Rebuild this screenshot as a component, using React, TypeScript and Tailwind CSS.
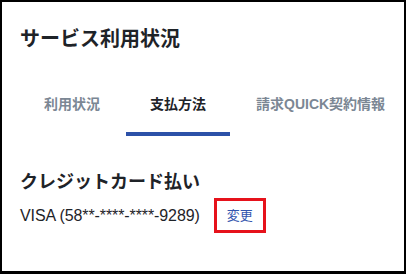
import React from "react";

const FONT = { fontFamily: '"Liberation Sans", "Noto Sans CJK JP", sans-serif' };

export default function App() {
  return (
    <div
      style={FONT}
      className="w-[406px] h-[274px] box-border border-2 border-b-[3px] border-black bg-white pl-[18px] pt-[23px] text-[#1e2328]"
    >
      <h1 className="text-[20px] leading-[28px] font-bold">サービス利用状況</h1>
      <div className="flex gap-[2px] mt-[23px]">
        <div className="px-6 pt-[18px] pb-[18px] border-b-4 border-transparent text-[14px] leading-[20px] font-bold text-[#7b8794] whitespace-nowrap">
          利用状況
        </div>
        <div className="px-6 pt-[18px] pb-[18px] border-b-4 border-[#2c51a8] text-[14px] leading-[20px] font-bold text-[#1e2328] whitespace-nowrap">
          支払方法
        </div>
        <div className="px-6 pt-[18px] pb-[18px] border-b-4 border-transparent text-[14px] leading-[20px] font-bold text-[#7b8794] whitespace-nowrap">
          請求QUICK契約情報
        </div>
      </div>
      <h2 className="mt-[33px] text-[18px] leading-[26px] font-bold">クレジットカード払い</h2>
      <div className="flex items-center mt-[3px]">
        <span className="text-[16px] leading-[20px] tracking-[-0.1px] text-[#1e2328]">VISA (58**-****-****-9289)</span>
        <a className="ml-[14px] h-[35px] box-border border-[3px] border-[#e6121b] px-[10px] flex items-center text-[13px] text-[#3456ae]">
          変更
        </a>
      </div>
    </div>
  );
}
